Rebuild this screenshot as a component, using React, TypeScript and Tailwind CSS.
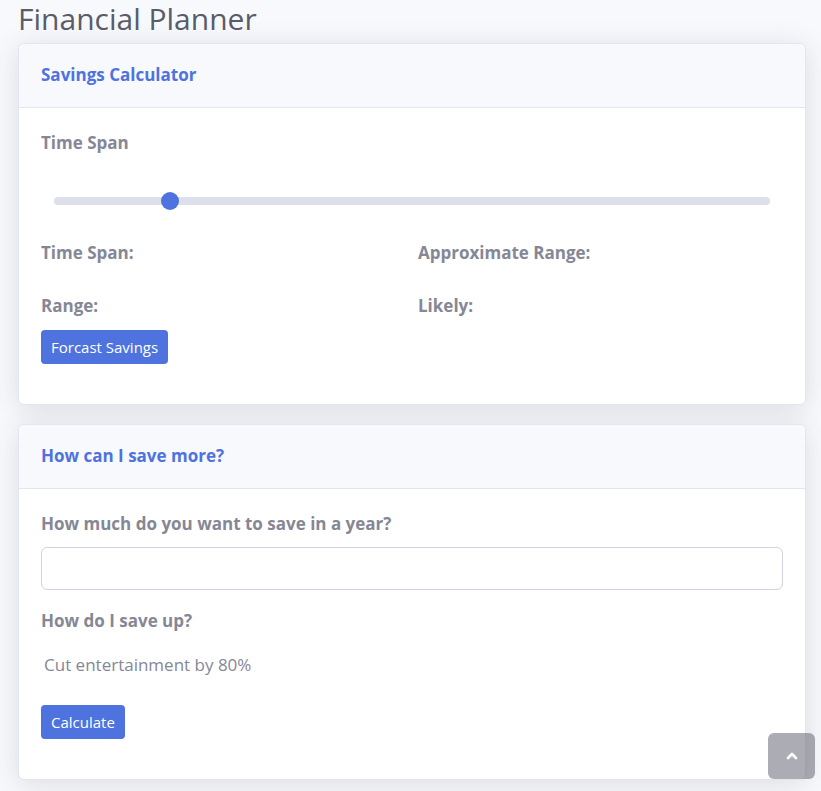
import { ChevronUp } from "lucide-react";

export default function App() {
  return (
    <div className="min-h-screen bg-[#f8f9fc] pl-[18px] pr-[15px] pb-[20px] font-['Open_Sans',sans-serif] text-[#858796]">
      <h1 className="h-[43px] pt-[1px] text-[30px] leading-[36px] font-normal text-[#5a5c69]">Financial Planner</h1>

      {/* Savings Calculator */}
      <div className="rounded-[6px] border border-[#e3e6f0] bg-white shadow-[0_4px_28px_0_rgba(58,59,69,0.15)]">
        <div className="flex h-[64px] items-center rounded-t-[6px] border-b border-[#e3e6f0] bg-[#f8f9fc] px-[22px] pb-[2px]">
          <h6 className="text-[17px] font-bold text-[#4e73df]">Savings Calculator</h6>
        </div>
        <div className="px-[22px] pt-[23px] pb-[40px]">
          <div className="text-[17px] leading-[24px] font-bold">Time Span</div>
          <div className="relative mx-[13px] mt-[37px] flex h-[18px] items-center">
            <div className="h-[8px] w-full rounded-full bg-[#dddfeb]" />
            <div className="absolute left-[107px] h-[18px] w-[18px] rounded-full bg-[#4e73df]" />
          </div>
          <div className="mt-[31px] grid grid-cols-[377px_1fr] text-[17px] leading-[24px] font-bold">
            <div>Time Span:</div>
            <div>Approximate Range:</div>
          </div>
          <div className="mt-[29px] grid grid-cols-[377px_1fr] text-[17px] leading-[24px] font-bold">
            <div>Range:</div>
            <div>Likely:</div>
          </div>
          <button className="mt-[12px] h-[34px] rounded-[4px] bg-[#4e73df] px-[10px] text-[15px] text-white">
            Forcast Savings
          </button>
        </div>
      </div>

      {/* How can I save more */}
      <div className="mt-[19px] rounded-[6px] border border-[#e3e6f0] bg-white shadow-[0_4px_28px_0_rgba(58,59,69,0.15)]">
        <div className="flex h-[64px] items-center rounded-t-[6px] border-b border-[#e3e6f0] bg-[#f8f9fc] px-[22px] pb-[2px]">
          <h6 className="text-[17px] font-bold text-[#4e73df]">How can I save more?</h6>
        </div>
        <div className="px-[22px] pt-[23px] pb-[40px]">
          <div className="text-[17px] leading-[24px] font-bold">How much do you want to save in a year?</div>
          <input
            type="text"
            className="mt-[11px] block h-[43px] w-full rounded-[6px] border border-[#d1d3e2] px-3 text-[16px] outline-none"
          />
          <div className="mt-[19px] text-[17px] leading-[24px] font-bold">How do I save up?</div>
          <p className="mt-[20px] pl-[3px] text-[17px] leading-[24px]">Cut entertainment by 80%</p>
          <button className="mt-[28px] block h-[34px] rounded-[4px] bg-[#4e73df] px-[10px] text-[15px] text-white">
            Calculate
          </button>
        </div>
      </div>

      <a className="fixed right-[6px] bottom-[12px] flex h-[46px] w-[47px] items-center justify-center rounded-[6px] bg-[rgba(90,92,105,0.5)] text-white">
        <ChevronUp size={16} strokeWidth={4} />
      </a>
    </div>
  );
}
